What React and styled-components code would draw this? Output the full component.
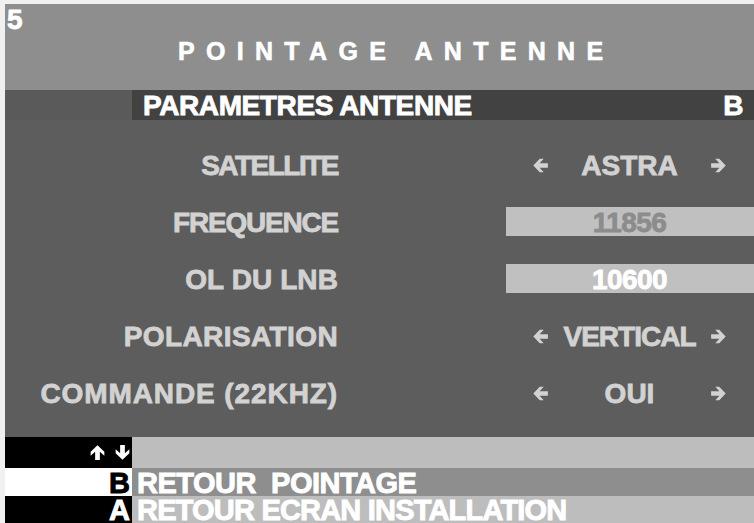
import React from "react";
import styled, { createGlobalStyle } from "styled-components";

const Global = createGlobalStyle`
  html, body { margin: 0; padding: 0; background: #f0f0f0; }
  body { width: 754px; height: 523px; overflow: hidden; }
  #root { padding: 4px 0 0 5px; }
`;

const Screen = styled.div`
  width: 749px;
  height: 519px;
  display: flex;
  flex-direction: column;
  font-family: "Liberation Sans", Arial, sans-serif;
  font-weight: 700;
  color: #fff;
  overflow: hidden;
`;

const Header = styled.div`
  height: 86px;
  background: #8e8e8e;
  display: grid;
  grid-template-columns: 40px 1fr;
`;

const PageNum = styled.div`
  font-size: 28px;
  line-height: 26px;
  padding: 3px 0 0 2px;
  -webkit-text-stroke: 0.8px #fff;
`;

const Title = styled.div`
  font-size: 25px;
  letter-spacing: 11.3px;
  padding: 35px 0 0 133px;
  line-height: 1;
  -webkit-text-stroke: 0.6px #fff;
`;

const SubHeader = styled.div`
  height: 30px;
  display: grid;
  grid-template-columns: 127px 1fr;
  background: #5a5a5a;
`;

const SubBar = styled.div`
  background: #424242;
  display: flex;
  justify-content: space-between;
  align-items: center;
  font-size: 28px;
  padding: 1px 11px 0 11px;
  line-height: 1;
  letter-spacing: -0.4px;
  -webkit-text-stroke: 0.8px #fff;
`;

const Body = styled.div`
  height: 317px;
  background: #5d5d5d;
  padding-top: 16px;
  box-sizing: border-box;
`;

const Row = styled.div`
  height: 57px;
  display: grid;
  grid-template-columns: 333px 168px 248px;
  align-items: center;
`;

const Label = styled.div`
  grid-column: 1;
  text-align: right;
  color: #d2d2d2;
  font-size: 28px;
  line-height: 1;
  padding-top: 2px;
  letter-spacing: ${(p) => p.$ls || "0px"};
  -webkit-text-stroke: 0.8px #d2d2d2;
  white-space: nowrap;
`;

const Value = styled.div`
  grid-column: 3;
  height: 29px;
  display: grid;
  grid-template-columns: 15px 1fr 15px;
  align-items: center;
  padding: 0 28px 0 27px;
  background: ${(p) => (p.$boxed ? "#c0c0c0" : "transparent")};
  color: ${(p) => p.$tone || "#d2d2d2"};
  font-size: 28px;
  line-height: 1;
`;

const ValueText = styled.span`
  grid-column: 2;
  text-align: center;
  padding-top: 2px;
  letter-spacing: ${(p) => p.$ls || "0px"};
  -webkit-text-stroke: 0.8px currentColor;
  white-space: nowrap;
`;

const Footer = styled.div`
  display: flex;
  flex-direction: column;
`;

const FootRow = styled.div`
  height: ${(p) => p.$h}px;
  display: grid;
  grid-template-columns: 127px 1fr;
`;

const KeyCell = styled.div`
  background: ${(p) => (p.$light ? "#ffffff" : "#000000")};
  color: ${(p) => (p.$light ? "#000000" : "#ffffff")};
  display: flex;
  justify-content: flex-end;
  align-items: center;
  gap: 10px;
  font-size: 29px;
  padding-right: 2px;
  line-height: ${(p) => p.$h}px;
  padding-top: ${(p) => p.$pt || 0}px;
  box-sizing: border-box;
  -webkit-text-stroke: 0.9px currentColor;
`;

const Action = styled.div`
  background: ${(p) => p.$bg};
  display: flex;
  align-items: center;
  font-size: 29px;
  padding-left: 5px;
  line-height: ${(p) => p.$h}px;
  padding-top: ${(p) => p.$pt || 0}px;
  box-sizing: border-box;
  white-space: pre;
  letter-spacing: ${(p) => p.$ls || "0px"};
  -webkit-text-stroke: 0.9px #fff;
`;

const Arrow = ({ dir, color = "#d2d2d2" }) => {
  const rot = { left: 0, right: 180, up: 90, down: 270 }[dir];
  return (
    <svg width="15" height="15" viewBox="0 0 14 14" style={{ transform: `rotate(${rot}deg)`, display: "block" }}>
      <path d="M0.3 7 L6.3 0.6 L10 0.6 L6.2 4.8 H13.9 V9.2 H6.2 L10 13.4 H6.3 Z" fill={color} />
    </svg>
  );
};

const rows = [
  { label: "SATELLITE", value: "ASTRA", arrows: true, ls: "-1.5px" },
  { label: "FREQUENCE", value: "11856", boxed: true, tone: "#8c8c8c", ls: "-1.2px", vls: "-0.6px" },
  { label: "OL DU LNB", value: "10600", boxed: true, tone: "#ffffff", ls: "0.1px", vls: "-0.6px" },
  { label: "POLARISATION", value: "VERTICAL", arrows: true, ls: "0.4px", vls: "-1px" },
  { label: "COMMANDE (22KHZ)", value: "OUI", arrows: true, ls: "0.9px" },
];

export default function App() {
  return (
    <>
      <Global />
      <Screen>
        <Header>
          <PageNum>5</PageNum>
          <Title>POINTAGE ANTENNE</Title>
        </Header>
        <SubHeader>
          <div />
          <SubBar>
            <span>PARAMETRES ANTENNE</span>
            <span>B</span>
          </SubBar>
        </SubHeader>
        <Body>
          {rows.map((r) => (
            <Row key={r.label}>
              <Label $ls={r.ls}>{r.label}</Label>
              <Value $boxed={r.boxed} $tone={r.tone}>
                {r.arrows ? <Arrow dir="left" /> : <span />}
                <ValueText $ls={r.vls}>{r.value}</ValueText>
                {r.arrows ? <Arrow dir="right" /> : <span />}
              </Value>
            </Row>
          ))}
        </Body>
        <Footer>
          <FootRow $h={31}>
            <KeyCell $h={31}>
              <Arrow dir="up" color="#fff" />
              <Arrow dir="down" color="#fff" />
            </KeyCell>
            <Action $bg="#bdbdbd" $h={31} />
          </FootRow>
          <FootRow $h={28}>
            <KeyCell $light $h={28} $pt={1}>B</KeyCell>
            <Action $bg="#8e8e8e" $h={28} $pt={1} $ls="-0.5px">{"RETOUR  POINTAGE"}</Action>
          </FootRow>
          <FootRow $h={27}>
            <KeyCell $h={27} $pt={1}>A</KeyCell>
            <Action $bg="#bdbdbd" $h={27} $pt={1} $ls="-0.8px">RETOUR ECRAN INSTALLATION</Action>
          </FootRow>
        </Footer>
      </Screen>
    </>
  );
}
